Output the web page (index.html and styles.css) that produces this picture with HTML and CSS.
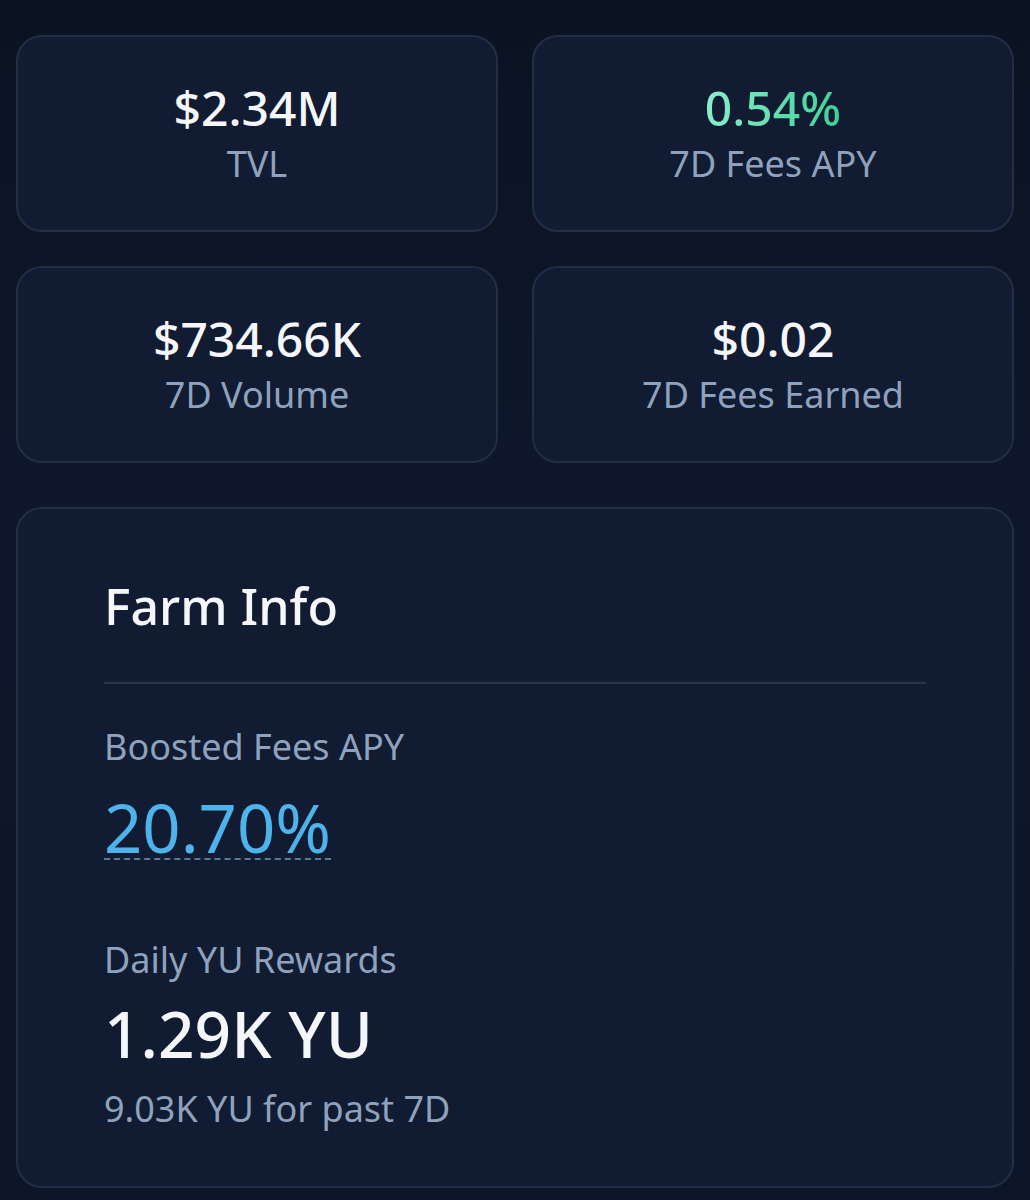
FILE: index.html
```html
<!DOCTYPE html>
<html lang="en">
<head>
<meta charset="UTF-8">
<title>Pool Stats</title>
<link rel="stylesheet" href="styles.css">
</head>
<body>

<div class="stats">
  <div class="stat">
    <div class="stat-value">$2.34M</div>
    <div class="stat-label">TVL</div>
  </div>
  <div class="stat">
    <div class="stat-value"><span class="green">0.54%</span></div>
    <div class="stat-label">7D Fees APY</div>
  </div>
  <div class="stat">
    <div class="stat-value">$734.66K</div>
    <div class="stat-label">7D Volume</div>
  </div>
  <div class="stat">
    <div class="stat-value">$0.02</div>
    <div class="stat-label">7D Fees Earned</div>
  </div>
</div>

<div class="farm">
  <h2>Farm Info</h2>
  <hr>
  <div class="farm-label">Boosted Fees APY</div>
  <div class="farm-apy"><span>20.70%</span></div>

  <div class="farm-label rewards">Daily YU Rewards</div>
  <div class="farm-big">1.29K YU</div>
  <div class="farm-sub">9.03K YU for past 7D</div>
</div>

</body>
</html>
```

FILE: styles.css
```css
body {
  margin: 0;
  padding: 35px 16px 10px;
  background: linear-gradient(#0b1222, #0e172b 40%, #0d1628);
  font-family: "Noto Sans", "DejaVu Sans", sans-serif;
  color: #f4f6fa;
  min-height: 1200px;
  box-sizing: border-box;
}
.stats {
  display: grid;
  grid-template-columns: 1fr 1fr;
  gap: 34px;
}
.stat {
  height: 197px;
  box-sizing: border-box;
  background: #111b31;
  border: 2px solid #232e44;
  border-radius: 26px;
  display: flex;
  flex-direction: column;
  align-items: center;
  justify-content: center;
  padding-bottom: 3px;
}
.stat-value {
  font-size: 48px;
  font-weight: 500;
  line-height: 58px;
}
.green {
  background: linear-gradient(90deg, #8aedcb, #3fd196);
  -webkit-background-clip: text;
  background-clip: text;
  color: transparent;
}
.stat-label {
  margin-top: 5px;
  font-size: 36px;
  line-height: 44px;
  color: #8fa2bd;
}
.farm {
  margin-top: 44px;
  background: #111b31;
  border: 2px solid #232e44;
  border-radius: 26px;
  padding: 67px 86px 55px;
}
.farm h2 {
  margin: 0;
  font-size: 50px;
  font-weight: 500;
  line-height: 60px;
}
.farm hr {
  border: 0;
  border-top: 2px solid #2a3448;
  margin: 46px 0 41px;
}
.farm-label {
  font-size: 36px;
  line-height: 44px;
  color: #8fa2bd;
}
.farm-label.rewards {
  margin-top: 78px;
}
.farm-apy {
  margin-top: 27px;
  height: 64px;
}
.farm-apy span {
  display: inline-block;
  font-size: 67px;
  line-height: 62px;
  color: #4db3ea;
  border-bottom: 2px dashed #5b7895;
}
.farm-big {
  margin-top: 15px;
  font-size: 64px;
  font-weight: 500;
  line-height: 74px;
}
.farm-sub {
  margin-top: 16px;
  font-size: 36px;
  line-height: 44px;
  color: #8fa2bd;
}
```
